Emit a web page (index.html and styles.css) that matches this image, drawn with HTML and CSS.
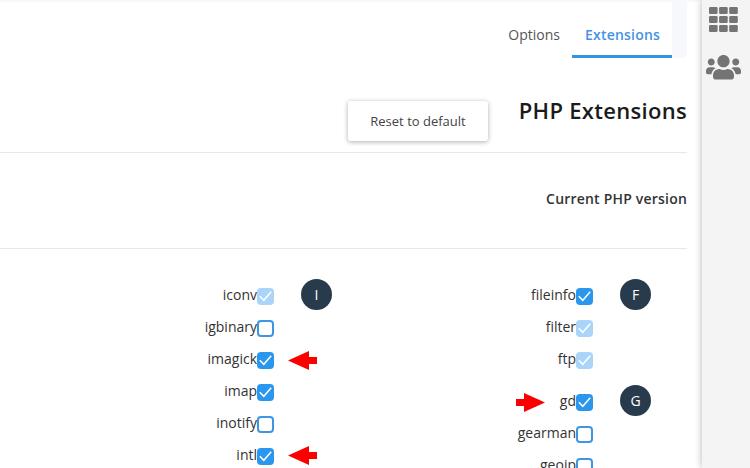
FILE: index.html
```html
<!doctype html>
<html>

<head>
  <title>PHP Extensions</title>
  <meta charset="UTF-8">
  <link rel="stylesheet" href="styles.css">
</head>

<body>
  <svg class="symbols">
    <symbol id="check" viewBox="0 0 17 17">
      <path d="M2.8 8.3 L6.8 12.3 L14.2 3.8" />
    </symbol>
    <symbol id="arrow" viewBox="0 0 29 19">
      <path d="M0 9.5 L21 0 V6 H29 V13 H21 V19 Z" />
    </symbol>
  </svg>
  <div class="page">
    <main class="main">
      <nav class="tabs">
        <a href="#" class="tab">Options</a>
        <a href="#" class="tab active">Extensions</a>
        <span class="tabs-end"></span>
      </nav>
      <header class="header">
        <button class="reset">Reset to default</button>
        <h1>PHP Extensions</h1>
      </header>
      <div class="version">Current PHP version</div>
      <div class="extensions">
        <div class="column">
          <div class="group">
            <ul>
              <li><span>iconv</span><i class="box checked disabled"><svg><use href="#check" /></svg></i></li>
              <li><span>igbinary</span><i class="box"></i></li>
              <li><span>imagick</span><i class="box checked"><svg><use href="#check" /></svg></i><svg class="arrow"><use href="#arrow" /></svg></li>
              <li><span>imap</span><i class="box checked"><svg><use href="#check" /></svg></i></li>
              <li><span>inotify</span><i class="box"></i></li>
              <li><span>intl</span><i class="box checked"><svg><use href="#check" /></svg></i><svg class="arrow arrow-intl"><use href="#arrow" /></svg></li>
            </ul>
            <div class="letter">I</div>
          </div>
        </div>
        <div class="column">
          <div class="group">
            <ul>
              <li><span>fileinfo</span><i class="box checked"><svg><use href="#check" /></svg></i></li>
              <li><span>filter</span><i class="box checked disabled"><svg><use href="#check" /></svg></i></li>
              <li><span>ftp</span><i class="box checked disabled"><svg><use href="#check" /></svg></i></li>
            </ul>
            <div class="letter">F</div>
          </div>
          <div class="group">
            <ul>
              <li><svg class="arrow arrow-right"><use href="#arrow" /></svg><span>gd</span><i class="box checked"><svg><use href="#check" /></svg></i></li>
              <li><span>gearman</span><i class="box"></i></li>
              <li><span>geoip</span><i class="box"></i></li>
            </ul>
            <div class="letter">G</div>
          </div>
        </div>
      </div>
    </main>
    <aside class="sidebar">
      <svg width="29" height="25" viewBox="0 0 29 25">
        <rect x="0" y="0" width="8.6" height="7" rx="1.3" />
        <rect x="10.1" y="0" width="8.6" height="7" rx="1.3" />
        <rect x="20.2" y="0" width="8.6" height="7" rx="1.3" />
        <rect x="0" y="9" width="8.6" height="7" rx="1.3" />
        <rect x="10.1" y="9" width="8.6" height="7" rx="1.3" />
        <rect x="20.2" y="9" width="8.6" height="7" rx="1.3" />
        <rect x="0" y="18" width="8.6" height="7" rx="1.3" />
        <rect x="10.1" y="18" width="8.6" height="7" rx="1.3" />
        <rect x="20.2" y="18" width="8.6" height="7" rx="1.3" />
      </svg>
      <svg width="35" height="25" viewBox="0 0 640 457">
        <path d="M96 192c35 0 64-29 64-64s-29-64-64-64-64 29-64 64 29 64 64 64zm448 0c35 0 64-29 64-64s-29-64-64-64-64 29-64 64 29 64 64 64zm32 32h-64c-18 0-34 7-45 18 40 22 69 62 75 110h66c18 0 32-14 32-32v-32c0-35-29-64-64-64zm-256 0c62 0 112-50 112-112S382 0 320 0 208 50 208 112s50 112 112 112zm77 32h-8c-21 10-44 16-69 16s-48-6-69-16h-8c-64 0-115 52-115 115v29c0 27 21 48 48 48h288c27 0 48-21 48-48v-29c0-63-51-115-115-115zm-224-14c-11-11-27-18-45-18H64c-35 0-64 29-64 64v32c0 18 14 32 32 32h66c6-48 35-88 75-110z" />
      </svg>
    </aside>
  </div>
</body>

</html>
```

FILE: styles.css
```css
html,
body {
  height: 100%;
  margin: 0;
  overflow: hidden;
  font-family: 'Open Sans', 'Noto Sans', sans-serif;
  font-size: 14px;
  color: #333;
  background-color: #fff;
}

.symbols {
  display: none;
}

.page {
  display: flex;
  height: 100%;
  overflow: hidden;
}

.main {
  flex: 1;
  padding-right: 15px;
  box-shadow: inset 0 3px 3px -2px rgba(0, 0, 0, .05);
}

.tabs {
  display: flex;
  justify-content: flex-end;
  height: 58px;
}

.tab {
  box-sizing: border-box;
  padding: 25px 12px 0;
  line-height: 20px;
  color: #555;
  text-decoration: none;
}

.tab.active {
  width: 100px;
  padding-left: 13px;
  border-bottom: 3px solid #3593e4;
  color: #4592e4;
  font-weight: 600;
  letter-spacing: .2px;
}

.tabs-end {
  width: 15px;
  background-color: #f6f8fb;
  border-bottom-right-radius: 4px;
}

.header {
  box-sizing: border-box;
  display: flex;
  justify-content: flex-end;
  align-items: flex-start;
  height: 95px;
  padding-top: 43px;
  border-bottom: 1px solid #e8e8e8;
}

.header h1 {
  width: 199px;
  margin: -8px 0 0;
  font-size: 22px;
  line-height: 34px;
  font-weight: 600;
  letter-spacing: .3px;
  text-align: right;
  color: #1b1b1b;
}

.reset {
  width: 140px;
  height: 40px;
  padding: 0;
  border: 0;
  border-radius: 3px;
  background-color: #fff;
  box-shadow: 0 1px 5px rgba(0, 0, 0, .32);
  font-family: inherit;
  font-size: 13px;
  color: #444;
}

.version {
  box-sizing: border-box;
  height: 96px;
  padding-top: 36px;
  border-bottom: 1px solid #e8e8e8;
  line-height: 20px;
  font-weight: 600;
  letter-spacing: .2px;
  text-align: right;
}

.extensions {
  display: flex;
  justify-content: flex-end;
  padding: 30px 36px 0 0;
}

.column {
  width: 319px;
}

.group {
  display: flex;
  justify-content: flex-end;
  gap: 27px;
  margin-bottom: 10px;
}

.group ul {
  margin: 0;
  padding: 0;
  list-style: none;
}

.group li {
  position: relative;
  display: flex;
  justify-content: flex-end;
  height: 32px;
  line-height: 32px;
}

.box {
  box-sizing: border-box;
  width: 17px;
  height: 17px;
  margin-top: 9px;
  border: 2px solid #3c96e2;
  border-radius: 4px;
}

.box.checked {
  border: 0;
  background-color: #2b96ee;
}

.box.disabled {
  background-color: #aad5f9;
}

.box svg {
  display: block;
  width: 17px;
  height: 17px;
  fill: none;
  stroke: #fff;
  stroke-width: 1.5;
}

.letter {
  width: 31px;
  height: 31px;
  border-radius: 50%;
  background-color: #283b4c;
  color: #fff;
  line-height: 32px;
  text-align: center;
}

/* arrows point at the required extensions */
.arrow {
  position: absolute;
  top: 8px;
  right: -43px;
  width: 29px;
  height: 19px;
  fill: #fb0000;
}

.arrow-intl {
  top: 7px;
}

.arrow-right {
  right: 48px;
  transform: scaleX(-1);
}

.sidebar {
  box-sizing: border-box;
  display: flex;
  flex-direction: column;
  align-items: center;
  gap: 23px;
  width: 48px;
  padding: 7px 5px 0 0;
  background-color: #f4f4f4;
  box-shadow: 0 0 7px rgba(0, 0, 0, .3);
}

.sidebar svg {
  fill: #747474;
}
```
